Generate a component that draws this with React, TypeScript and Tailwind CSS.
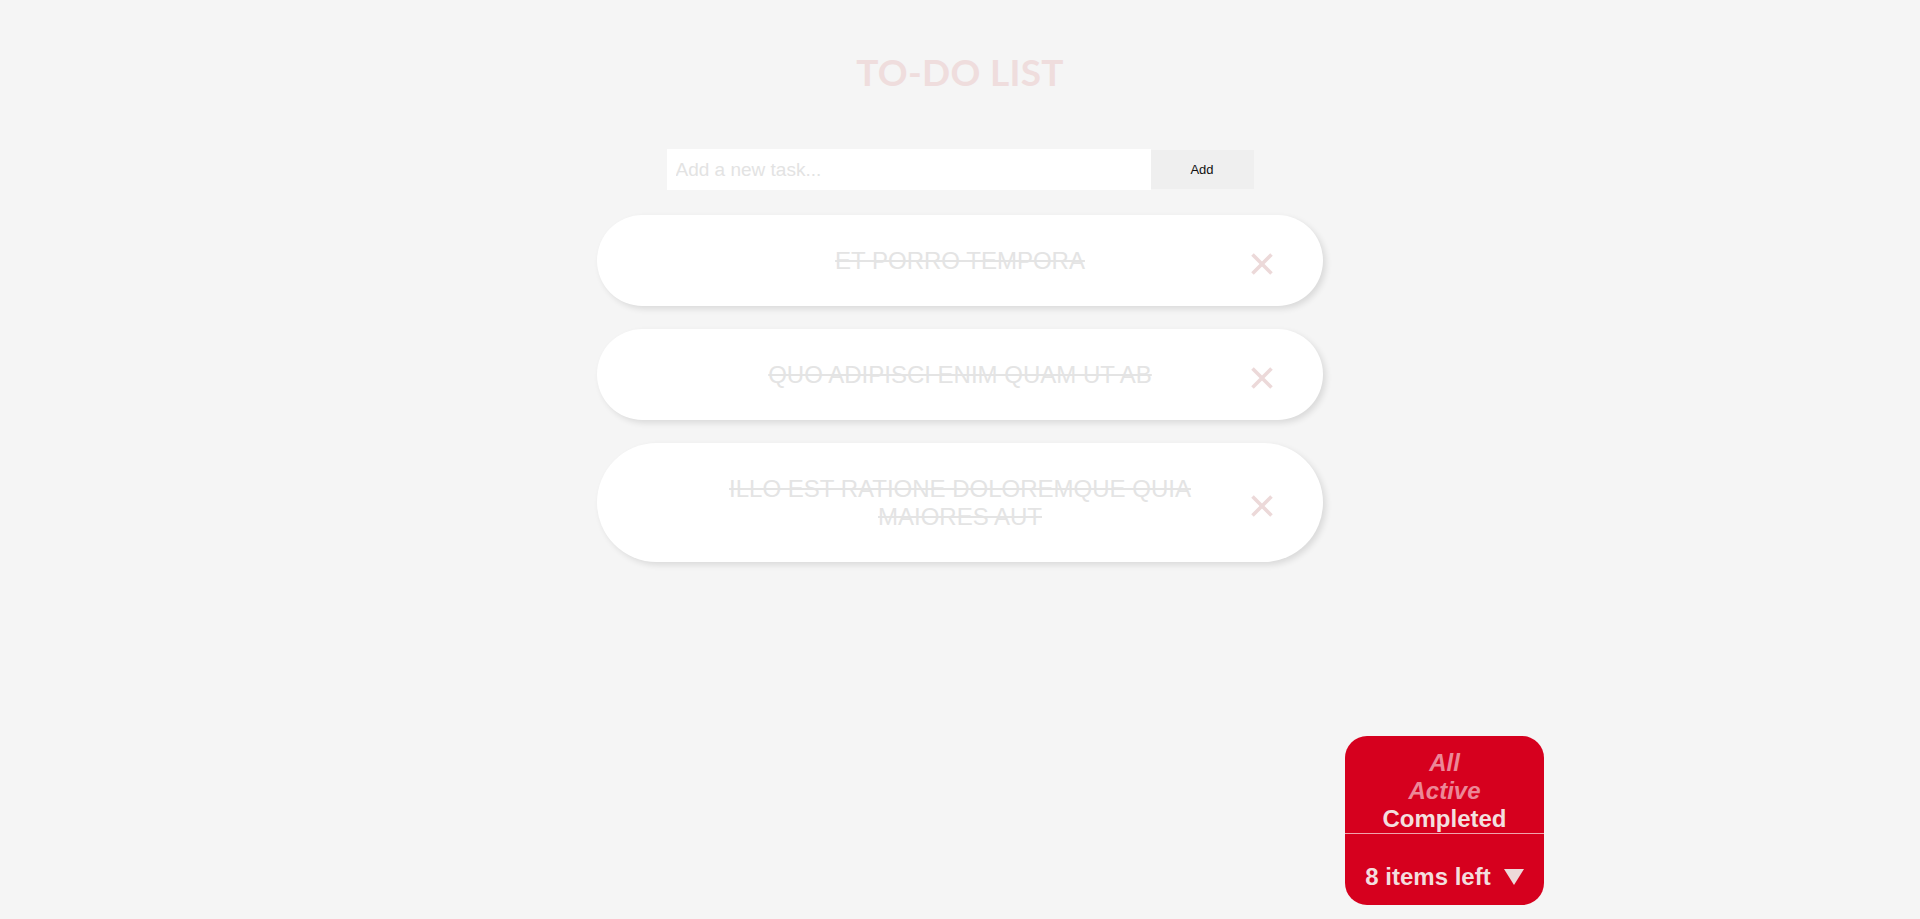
import React, { useState } from 'react';

type Task = {
    id: number;
    title: string;
    completed: boolean;
};

const initialTasks: Task[] = [
    { id: 1, title: 'et porro tempora', completed: true },
    { id: 2, title: 'quo adipisci enim quam ut ab', completed: true },
    { id: 3, title: 'illo est ratione doloremque quia maiores aut', completed: true },
];

const CloseIcon: React.FC = () => (
    <svg width="24" height="24" viewBox="0 0 24 24" fill="none">
        <path d="M2.5 2.5 L21.5 21.5 M21.5 2.5 L2.5 21.5" stroke="#ecd9d9" strokeWidth="3.6" />
    </svg>
);

const App: React.FC = () => {
    const [tasks, setTasks] = useState<Task[]>(initialTasks);
    const [text, setText] = useState('');
    const [filter, setFilter] = useState<'all' | 'active' | 'completed'>('completed');

    const addTask = () => {
        if (!text.trim()) return;
        setTasks([...tasks, { id: Date.now(), title: text, completed: false }]);
        setText('');
    };

    const filterClass = (name: string) =>
        filter === name ? 'not-italic text-[#f3dfdf]' : 'italic text-[#ec8797]';

    return (
        <div className="min-h-screen bg-[#f5f5f5] grid grid-cols-[1fr_726px_1fr] font-['Liberation_Sans',Arial,sans-serif]">
            <div />
            <main className="flex flex-col items-center pt-[50px]">
                <h1 className="font-['Lato',sans-serif] font-bold text-[37px] leading-[44px] text-[#efdddd] tracking-[0.3px]">
                    TO-DO LIST
                </h1>
                <div className="flex items-center mt-[55px]">
                    <input
                        value={text}
                        onChange={(e) => setText(e.target.value)}
                        placeholder="Add a new task..."
                        className="w-[484px] h-[41px] bg-white pl-[9px] text-[19px] text-gray-700 placeholder:text-[#e3e3e3] outline-none"
                    />
                    <button
                        onClick={addTask}
                        className="w-[103px] h-[39px] bg-[#efefef] text-[13px] text-[#111]"
                    >
                        Add
                    </button>
                </div>
                <ul className="w-full flex flex-col gap-[23px] mt-[25px]">
                    {tasks.map((task) => (
                        <li
                            key={task.id}
                            className="relative bg-white rounded-full px-[120px] py-[31.5px] shadow-[3px_3px_6px_rgba(0,0,0,0.11)]"
                        >
                            <p
                                className={`text-center uppercase text-[24px] leading-[28px] text-[#e4e4e4] ${task.completed ? 'line-through' : ''}`}
                            >
                                {task.title}
                            </p>
                            <button
                                onClick={() => setTasks(tasks.filter((t) => t.id !== task.id))}
                                className="absolute right-[49px] top-1/2 -translate-y-1/2 mt-[3px] flex"
                            >
                                <CloseIcon />
                            </button>
                        </li>
                    ))}
                </ul>
            </main>
            <aside className="flex flex-col justify-end pl-[22px] pb-[14px]">
                <div className="w-[199px] h-[169px] rounded-[22px] bg-[#d6001e] flex flex-col font-bold text-[24px] leading-[28px]">
                    <div className="flex flex-col items-center pt-[13px] border-b border-[#f0a3ad]">
                        <button onClick={() => setFilter('all')} className={filterClass('all')}>All</button>
                        <button onClick={() => setFilter('active')} className={filterClass('active')}>Active</button>
                        <button onClick={() => setFilter('completed')} className={filterClass('completed')}>Completed</button>
                    </div>
                    <div className="flex-1 flex items-end justify-center pb-[14px] text-[#f3dede]">
                        <span>{tasks.length + 5} items left</span>
                        <svg width="20" height="16" viewBox="0 0 20 16" className="ml-[13px] mb-[6px]">
                            <polygon points="0,0 20,0 10,16" fill="#eddada" />
                        </svg>
                    </div>
                </div>
            </aside>
        </div>
    );
};

export default App;
